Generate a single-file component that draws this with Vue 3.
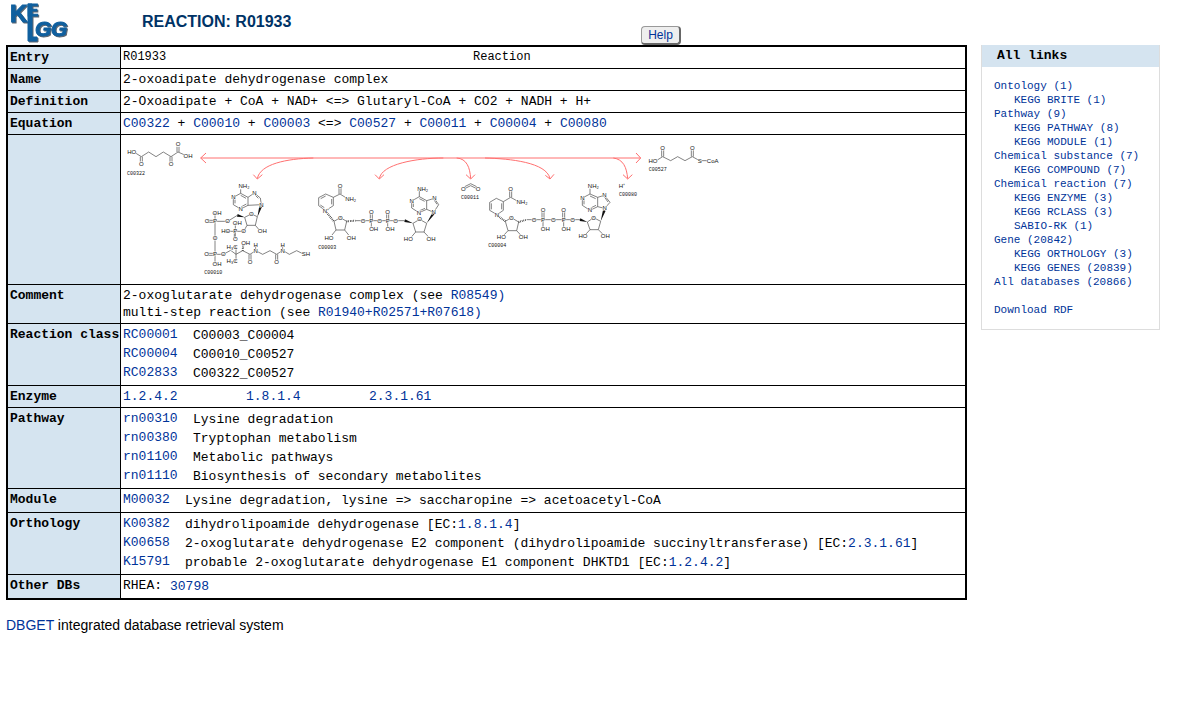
<script setup>
const equation = ['C00322', '+', 'C00010', '+', 'C00003', '<=>', 'C00527', '+', 'C00011', '+', 'C00004', '+', 'C00080']

const reactionClasses = [
  ['RC00001', 'C00003_C00004'],
  ['RC00004', 'C00010_C00527'],
  ['RC02833', 'C00322_C00527'],
]
const enzymes = ['1.2.4.2', '1.8.1.4', '2.3.1.61']
const pathways = [
  ['rn00310', 'Lysine degradation'],
  ['rn00380', 'Tryptophan metabolism'],
  ['rn01100', 'Metabolic pathways'],
  ['rn01110', 'Biosynthesis of secondary metabolites'],
]
const orthologies = [
  ['K00382', 'dihydrolipoamide dehydrogenase', '1.8.1.4'],
  ['K00658', '2-oxoglutarate dehydrogenase E2 component (dihydrolipoamide succinyltransferase)', '2.3.1.61'],
  ['K15791', 'probable 2-oxoglutarate dehydrogenase E1 component DHKTD1', '1.2.4.2'],
]
const links = [
  ['Ontology (1)', 0],
  ['KEGG BRITE (1)', 1],
  ['Pathway (9)', 0],
  ['KEGG PATHWAY (8)', 1],
  ['KEGG MODULE (1)', 1],
  ['Chemical substance (7)', 0],
  ['KEGG COMPOUND (7)', 1],
  ['Chemical reaction (7)', 0],
  ['KEGG ENZYME (3)', 1],
  ['KEGG RCLASS (3)', 1],
  ['SABIO-RK (1)', 1],
  ['Gene (20842)', 0],
  ['KEGG ORTHOLOGY (3)', 1],
  ['KEGG GENES (20839)', 1],
  ['All databases (20866)', 0],
]

// Structures, three units to a pixel: bonds, wedges, hatched bonds, atoms, entry names
const molecules = [
  {
    x: 360,
    bonds:
      'M48 58L64 68L86 54L108 68L130 54L153 68L174 54L192 62M61 68V83M67 68V83M150 68V83M156 68V83M171 54V38M177 54V38' +
      'M362 166V178L384 190V214L362 225L340 212V190L362 178M384 190L403 177L421 192L424 212L384 214M362 184L378 193M379 210L363 219M345 208V196M405 183L415 193' +
      'M412 248L394 240L374 250L381 274H406L412 248M352 244L323 262H285M262 259H285M262 265H285M285 236V389M262 358H285M262 364H285M285 361H310' +
      'L332 349L348 361L368 350L390 361L407 350L428 361L450 350L470 361L488 349L508 361L530 350L548 359M348 361V338L342 338M348 361V381L342 381M387 361V378M393 361V378M467 361V378M473 361V378M407 336V348M488 336V348' +
      'M406 274L418 288M381 274L371 292H317M346 268V314M343 292V312',
    wedges: 'M412 250L418 216L426 218ZM374 250L353 240L351 248Z',
    hatches: 'M368 350L370 332',
    atoms: [
      [35, 53, 'HO'], [204, 66, 'OH'], [64, 91, 'O'], [153, 91, 'O'], [174, 29, 'O'],
      [372, 157, 'NH₂'], [340, 189, 'N'], [362, 225, 'N'], [403, 177, 'N'], [424, 212, 'N'],
      [394, 240, 'O'], [323, 262, 'O'], [285, 262, 'P'], [261, 262, 'O'], [291, 236, 'OH'],
      [285, 312, 'O'], [285, 361, 'P'], [260, 361, 'O'], [291, 389, 'OH'], [310, 361, 'O'],
      [336, 338, 'H₃C'], [336, 381, 'H₃C'], [377, 326, 'OH'], [390, 383, 'O'],
      [407, 350, 'N'], [407, 333, 'H'], [470, 384, 'O'], [488, 350, 'N'], [488, 333, 'H'], [558, 361, 'SH'],
      [427, 292, 'OH'], [371, 292, 'O'], [346, 292, 'P'], [317, 292, 'HO'], [352, 268, 'OH'], [346, 314, 'O'],
    ],
    names: [[48, 117, 'C00322'], [280, 414, 'C00010']],
  },
  {
    x: 930,
    bonds:
      'M87 162V180M93 162V180M106 190L90 180L70 190L47 180L26 191V215L47 230L70 215V190M47 186L32 194M31 213L43 221M65 211V195' +
      'M72 262L91 251L110 262L104 288H78L72 262M78 288L66 303M104 288L116 303M136 260H284M181 257V238M187 257V238M230 257V238M236 257V238M184 260V280M233 260V280' +
      'M328 170V188L350 200V226L327 236L305 222V201L328 188M350 200L373 193L386 212L371 235L350 226M328 194L344 202M345 223L329 230M310 219V205M373 199L381 211' +
      'M350 268L329 256L309 268L317 294H342L350 268M317 294L305 308M342 294L355 308',
    wedges: 'M350 268L367 236L374 240ZM309 268L285 256L283 264Z',
    hatches: 'M50 236L72 262M110 262L136 260',
    atoms: [
      [90, 155, 'O'], [122, 194, 'NH₂'], [48, 230, 'N⁺'], [91, 251, 'O'], [57, 311, 'HO'], [124, 311, 'OH'],
      [159, 260, 'O'], [184, 260, 'P'], [209, 260, 'O'], [233, 260, 'P'], [257, 260, 'O'],
      [184, 235, 'O'], [233, 235, 'O'], [191, 285, 'OH'], [240, 285, 'OH'],
      [338, 164, 'NH₂'], [305, 201, 'N'], [327, 237, 'N'], [373, 193, 'N'], [371, 235, 'N'],
      [329, 256, 'O'], [295, 315, 'HO'], [363, 314, 'OH'],
    ],
    names: [[52, 340, 'C00003']],
  },
  {
    x: 930,
    bonds: 'M464 158L482 149L500 158M464 164L482 155L500 164',
    wedges: '',
    hatches: '',
    atoms: [[460, 164, 'O'], [504, 164, 'O']],
    names: [[480, 190, 'C00011']],
  },
  {
    x: 1410,
    bonds:
      'M119 170V190M125 170V190M140 200L122 190L100 203L79 193L59 205V229L81 242L100 229V203M64 226V208M95 226V208' +
      'M106 262L124 251L146 264L140 290H114L106 262M114 290L102 303M140 290L152 303M170 257H330M216 254V234M222 254V234M278 254V234M284 254V234M219 257V280M281 257V280' +
      'M360 164V180L383 190V218L360 229L337 214V192L360 180M383 190L403 184L420 205L404 223L383 218M360 186L377 194M378 214L362 222M342 211V196M404 190L414 204' +
      'M392 262L371 251L352 264L360 287H385L392 262M360 287L348 300M385 287L398 300' +
      'M562 78L578 68L602 80L623 68L645 80L667 68L689 80H714M575 68V48M581 68V48M664 68V48M670 68V48',
    wedges: 'M392 262L399 228L407 230ZM352 264L331 253L329 261Z',
    hatches: 'M84 246L106 262M146 264L170 257',
    atoms: [
      [122, 165, 'O'], [156, 205, 'NH₂'], [81, 242, 'N'], [124, 251, 'O'], [94, 309, 'HO'], [160, 309, 'OH'],
      [192, 257, 'O'], [219, 257, 'P'], [250, 257, 'O'], [281, 257, 'P'], [308, 257, 'O'],
      [219, 229, 'O'], [281, 229, 'O'], [226, 284, 'OH'], [288, 285, 'OH'],
      [370, 157, 'NH₂'], [337, 192, 'N'], [360, 229, 'N'], [403, 184, 'N'], [404, 223, 'N'],
      [371, 251, 'O'], [339, 306, 'HO'], [406, 306, 'OH'], [456, 156, 'H⁺'],
      [549, 81, 'HO'], [578, 41, 'O'], [667, 41, 'O'], [689, 80, 'S'], [728, 80, 'CoA'],
    ],
    names: [[82, 335, 'C00004'], [474, 181, 'C00080'], [563, 105, 'C00527']],
  },
]
</script>

<template>
  <div class="page">
    <main class="main">
      <header class="head">
        <a href="#" class="logo" aria-label="KEGG">
          <svg width="64" height="44" viewBox="-2 -2 64 44">
            <path d="M18 2H22V35H27V39H18Z" />
            <text x="0" y="20" font-size="24">K</text>
            <text x="17" y="14" font-size="17">E</text>
            <text x="25" y="34" font-size="21" font-style="italic">G</text>
            <text x="41" y="34" font-size="21" font-style="italic">G</text>
          </svg>
        </a>
        <h1>REACTION: R01933</h1>
        <button type="button" class="help">Help</button>
      </header>

      <table class="entry">
        <tbody>
          <tr>
            <th scope="row">Entry</th>
            <td><div class="entry-id"><span>R01933</span><span>Reaction</span></div></td>
          </tr>
          <tr>
            <th scope="row">Name</th>
            <td>2-oxoadipate dehydrogenase complex</td>
          </tr>
          <tr>
            <th scope="row">Definition</th>
            <td>2-Oxoadipate + CoA + NAD+ &lt;=&gt; Glutaryl-CoA + CO2 + NADH + H+</td>
          </tr>
          <tr>
            <th scope="row">Equation</th>
            <td>
              <template v-for="(t, i) in equation" :key="i"><a v-if="t[0] === 'C'" href="#">{{ t }}</a><template v-else>{{ ' ' + t + ' ' }}</template></template>
            </td>
          </tr>
          <tr>
            <th scope="row" aria-label="Structure"></th>
            <td>
              <svg class="scheme" width="600" height="145" viewBox="369 411 1800 435">
                <path
                  class="arrows"
                  d="M602 474H1922M618 459L602 474L618 489M1908 459L1922 474L1908 489
                     M940 474C860 476 780 492 772 536M760 524L772 537L787 524
                     M1330 474C1250 474 1145 492 1138 536M1125 524L1138 537L1152 524
                     M1370 474C1400 476 1410 502 1412 536M1398 524L1412 537L1425 524
                     M1455 474C1530 476 1640 487 1650 536M1636 526L1650 537L1662 523
                     M1840 474C1870 478 1880 502 1883 536M1869 524L1883 537L1897 524"
                />
                <g v-for="(m, i) in molecules" :key="i" :transform="`translate(${m.x} 402)`">
                  <path class="bonds" :d="m.bonds" />
                  <path v-if="m.wedges" class="wedges" :d="m.wedges" />
                  <path v-if="m.hatches" class="hatches" :d="m.hatches" />
                  <text v-for="(a, j) in m.atoms" :key="j" class="atom" :x="a[0]" :y="a[1] + 6">{{ a[2] }}</text>
                  <text v-for="n in m.names" :key="n[2]" class="name" :x="n[0]" :y="n[1] + 5">{{ n[2] }}</text>
                </g>
              </svg>
            </td>
          </tr>
          <tr>
            <th scope="row">Comment</th>
            <td>
              2-oxoglutarate dehydrogenase complex (see <a href="#">R08549)</a><br />
              multi-step reaction (see <a href="#">R01940+R02571+R07618)</a>
            </td>
          </tr>
          <tr>
            <th scope="row">Reaction class</th>
            <td>
              <div v-for="r in reactionClasses" :key="r[0]" class="pair wide">
                <a href="#">{{ r[0] }}</a><span>{{ r[1] }}</span>
              </div>
            </td>
          </tr>
          <tr>
            <th scope="row">Enzyme</th>
            <td>
              <div class="enzymes"><a v-for="e in enzymes" :key="e" href="#">{{ e }}</a></div>
            </td>
          </tr>
          <tr>
            <th scope="row">Pathway</th>
            <td>
              <div v-for="p in pathways" :key="p[0]" class="pair wide">
                <a href="#">{{ p[0] }}</a><span>{{ p[1] }}</span>
              </div>
            </td>
          </tr>
          <tr>
            <th scope="row">Module</th>
            <td>
              <div class="pair">
                <a href="#">M00032</a><span>Lysine degradation, lysine =&gt; saccharopine =&gt; acetoacetyl-CoA</span>
              </div>
            </td>
          </tr>
          <tr>
            <th scope="row">Orthology</th>
            <td>
              <div v-for="o in orthologies" :key="o[0]" class="pair">
                <a href="#">{{ o[0] }}</a><span>{{ o[1] }} [EC:<a href="#">{{ o[2] }}</a>]</span>
              </div>
            </td>
          </tr>
          <tr>
            <th scope="row">Other DBs</th>
            <td>
              <div class="pair short"><span class="db">RHEA:</span><span><a href="#">30798</a></span></div>
            </td>
          </tr>
        </tbody>
      </table>

      <footer class="foot"><a href="#">DBGET</a> integrated database retrieval system</footer>
    </main>

    <aside class="side">
      <h2>All links</h2>
      <ul>
        <li v-for="l in links" :key="l[0]" :class="{ sub: l[1] }"><a href="#">{{ l[0] }}</a></li>
        <li class="download"><a href="#">Download RDF</a></li>
      </ul>
    </aside>
  </div>
</template>

<style>
body {
  background: #fff;
}
</style>

<style scoped>
.page {
  display: flex;
  align-items: flex-start;
  gap: 14px;
  padding: 0 39px 0 6px;
  color: #000;
  font-family: "Liberation Sans", Arial, sans-serif;
}
a {
  color: #039;
  text-decoration: none;
}
.main {
  flex: 1;
  min-width: 0;
}
.head {
  display: grid;
  grid-template-columns: 136px 499px auto;
  justify-content: start;
  height: 45px;
}
.logo {
  padding-left: 2px;
}
.logo svg {
  display: block;
  overflow: visible;
  fill: #10609f;
  stroke: #10609f;
  filter: drop-shadow(1px 1px 0 #5d6670);
}
.logo text {
  font-family: "Liberation Sans", Arial, sans-serif;
  font-weight: bold;
}
.head h1 {
  margin: 0;
  padding-top: 13px;
  font-size: 16px;
  line-height: 18px;
  color: #036;
}
.help {
  align-self: end;
  width: 40px;
  height: 19px;
  padding: 0;
  border: 1px solid #999;
  border-right: 2px solid #666;
  border-bottom: 2px solid #666;
  border-radius: 4px;
  background: #eee;
  color: #039;
  font: 12px/14px "Liberation Sans", Arial, sans-serif;
}
.entry {
  width: 100%;
  border: 2px solid #000;
  border-spacing: 0;
  font: 13px/17px "Liberation Mono", monospace;
}
.entry th,
.entry td {
  padding: 2px;
  border-bottom: 1px solid #000;
  text-align: left;
  vertical-align: top;
}
.entry th {
  width: 110px;
  padding-right: 0;
  border-right: 1px solid #000;
  background: #d5e4f0;
  white-space: nowrap;
}
.entry tr:last-child th,
.entry tr:last-child td {
  border-bottom: 0;
}
.entry-id {
  display: grid;
  grid-template-columns: 350px auto;
  justify-content: start;
  font-size: 12px;
}
.pair {
  display: grid;
  grid-template-columns: 62px 1fr;
  height: 19px;
}
.pair.wide {
  grid-template-columns: 70px 1fr;
}
.pair.short {
  grid-template-columns: 47px 1fr;
}
.pair > span {
  line-height: 19px;
}
.pair > .db {
  line-height: 17px;
}
.enzymes {
  display: grid;
  grid-template-columns: repeat(3, 123px);
}
.scheme {
  display: block;
}
.scheme path {
  fill: none;
}
.arrows {
  stroke: #ff7070;
  stroke-width: 3;
}
.bonds {
  stroke: #444;
  stroke-width: 2;
}
.scheme .wedges {
  fill: #111;
}
.hatches {
  stroke: #222;
  stroke-width: 6;
  stroke-dasharray: 2 3;
}
.atom,
.name {
  text-anchor: middle;
  fill: #111;
}
.atom {
  font: 18px "Liberation Sans", Arial, sans-serif;
  paint-order: stroke;
  stroke: #fff;
  stroke-width: 3;
}
.name {
  font: 15px "Liberation Mono", monospace;
}
.foot {
  padding-top: 17px;
  font-size: 14px;
  line-height: 17px;
}
.side {
  flex: 0 0 177px;
  margin-top: 45px;
  border: 1px solid #ddd;
  border-top: 0;
  font-family: "Liberation Mono", monospace;
}
.side h2 {
  margin: 0;
  padding-left: 15px;
  background: #d5e4f0;
  font-size: 13px;
  line-height: 22px;
}
.side ul {
  margin: 0;
  padding: 12px;
  list-style: none;
  font-size: 11px;
  line-height: 14px;
}
.sub {
  padding-left: 20px;
}
.download {
  margin-top: 14px;
}
</style>
